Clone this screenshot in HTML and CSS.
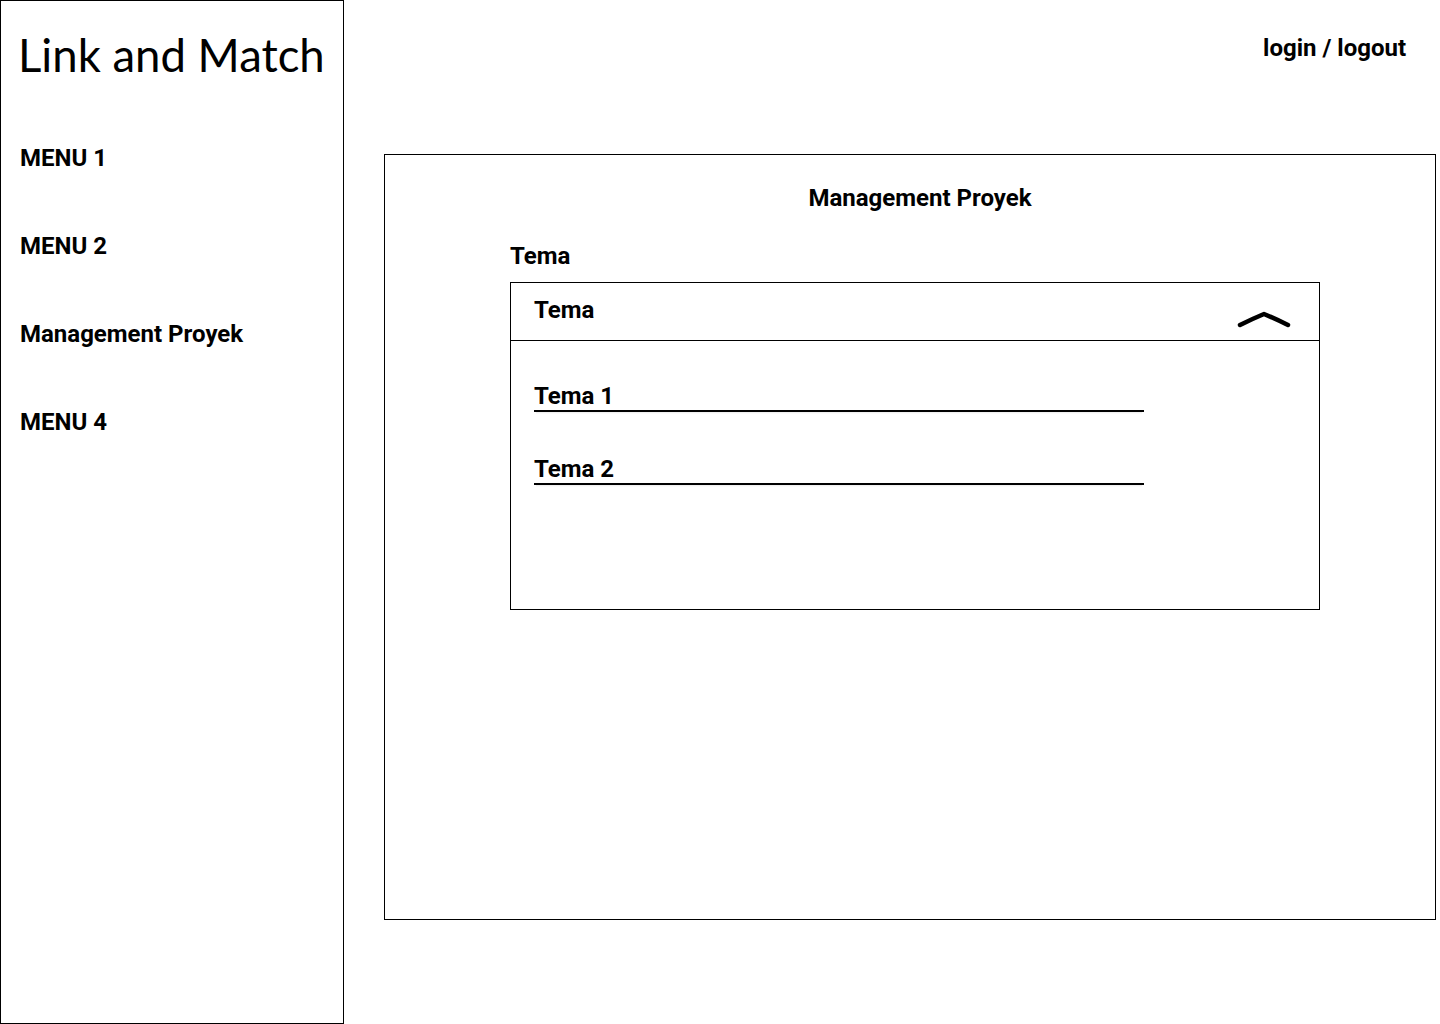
FILE: index.html
```html
<!DOCTYPE html>
<html lang="id">
<head>
<meta charset="utf-8">
<title>Link and Match</title>
<link rel="stylesheet" href="styles.css">
</head>
<body>
<div class="page">
  <aside class="sidebar">
    <div class="brand">Link and Match</div>
    <nav class="menu">
      <div class="menu-item">MENU 1</div>
      <div class="menu-item">MENU 2</div>
      <div class="menu-item">Management Proyek</div>
      <div class="menu-item">MENU 4</div>
    </nav>
  </aside>
  <main class="main">
    <header class="topbar">
      <span class="auth">login / logout</span>
    </header>
    <section class="card">
      <h1 class="card-title">Management Proyek</h1>
      <div class="field">
        <div class="field-label">Tema</div>
        <div class="dropdown">
          <div class="dropdown-head">
            <span>Tema</span>
            <svg class="chevron" width="56" height="20" viewBox="0 0 56 20">
              <path d="M4 16 Q16 10 28 5 Q40 10 52 16" fill="none" stroke="#000" stroke-width="4.5" stroke-linecap="round" stroke-linejoin="round"/>
            </svg>
          </div>
          <div class="dropdown-list">
            <div class="option">Tema 1</div>
            <div class="option">Tema 2</div>
          </div>
        </div>
      </div>
    </section>
  </main>
</div>
</body>
</html>
```

FILE: styles.css
```css
* { box-sizing: border-box; }
html, body { margin: 0; padding: 0; background: #fff; }
body {
  font-family: Roboto, "Liberation Sans", Arial, sans-serif;
  color: #000;
}
.page {
  display: flex;
  width: 1440px;
  height: 1024px;
}
.sidebar {
  width: 344px;
  height: 1024px;
  border: 1px solid #000;
  padding: 27px 0 0 19px;
  flex: none;
}
.brand {
  font-family: Lato, "Noto Sans", sans-serif;
  font-weight: 400;
  font-size: 45.5px;
  line-height: 54px;
  white-space: nowrap;
  margin-left: -2px;
}
.menu {
  margin-top: 62px;
  display: flex;
  flex-direction: column;
  gap: 60px;
}
.menu-item {
  font-weight: 700;
  font-size: 24px;
  line-height: 28px;
}
.main {
  flex: 1;
  display: flex;
  flex-direction: column;
  padding: 0 4px 0 40px;
}
.topbar {
  height: 154px;
  display: flex;
  justify-content: flex-end;
  padding: 34px 30px 0 0;
}
.auth {
  font-weight: 700;
  font-size: 24px;
  line-height: 28px;
}
.card {
  width: 1052px;
  height: 766px;
  border: 1px solid #000;
  padding-top: 29px;
}
.card-title {
  margin: 0;
  text-align: center;
  font-weight: 700;
  font-size: 24px;
  line-height: 28px;
  padding-left: 20px;
}
.field {
  margin: 30px 0 0 125px;
  width: 810px;
}
.field-label {
  font-weight: 700;
  font-size: 24px;
  line-height: 28px;
  margin-bottom: 12px;
}
.dropdown {
  height: 328px;
  border: 1px solid #000;
}
.dropdown-head {
  height: 58px;
  border-bottom: 1px solid #000;
  display: flex;
  align-items: center;
  justify-content: space-between;
  padding: 0 27px 0 23px;
  font-weight: 700;
  font-size: 24px;
  line-height: 28px;
}
.dropdown-head span { margin-top: -3px; }
.chevron { margin-top: 14px; }
.dropdown-list {
  padding: 41px 0 0 23px;
  display: flex;
  flex-direction: column;
  gap: 43px;
}
.option {
  position: relative;
  width: 610px;
  font-weight: 700;
  font-size: 24px;
  line-height: 28px;
  border-bottom: 2px solid #000;
}
.option::after {
  content: "";
  position: absolute;
  left: 2px;
  right: 2px;
  top: 100%;
  height: 4px;
  background: linear-gradient(to bottom, rgba(0,0,0,0.16), rgba(0,0,0,0));
}
```
